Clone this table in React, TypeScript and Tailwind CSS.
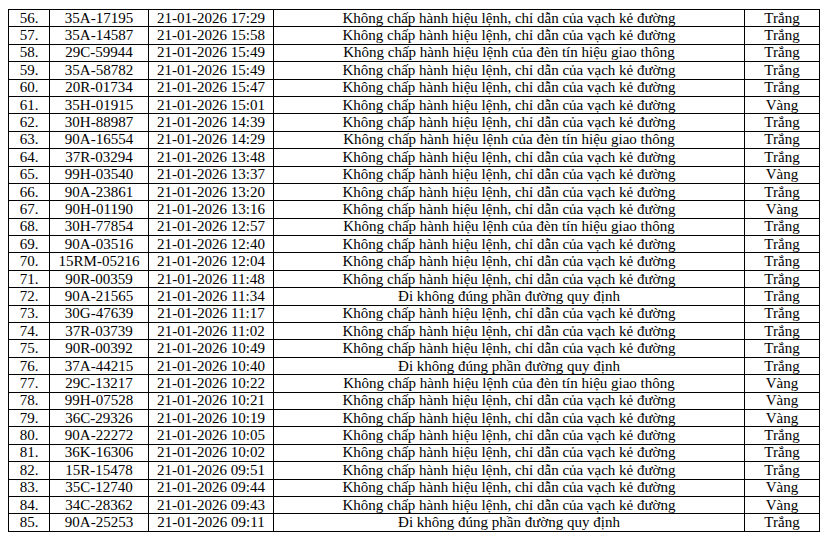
import React from 'react';

const VACH = 'Không chấp hành hiệu lệnh, chỉ dẫn của vạch kẻ đường';
const DEN = 'Không chấp hành hiệu lệnh của đèn tín hiệu giao thông';
const DI = 'Đi không đúng phần đường quy định';

const rows: [string, string, string, string][] = [
  ['35A-17195', '17:29', VACH, 'Trắng'],
  ['35A-14587', '15:58', VACH, 'Trắng'],
  ['29C-59944', '15:49', DEN, 'Trắng'],
  ['35A-58782', '15:49', VACH, 'Trắng'],
  ['20R-01734', '15:47', VACH, 'Trắng'],
  ['35H-01915', '15:01', VACH, 'Vàng'],
  ['30H-88987', '14:39', VACH, 'Trắng'],
  ['90A-16554', '14:29', DEN, 'Trắng'],
  ['37R-03294', '13:48', VACH, 'Trắng'],
  ['99H-03540', '13:37', VACH, 'Vàng'],
  ['90A-23861', '13:20', VACH, 'Trắng'],
  ['90H-01190', '13:16', VACH, 'Vàng'],
  ['30H-77854', '12:57', DEN, 'Trắng'],
  ['90A-03516', '12:40', VACH, 'Trắng'],
  ['15RM-05216', '12:04', VACH, 'Trắng'],
  ['90R-00359', '11:48', VACH, 'Trắng'],
  ['90A-21565', '11:34', DI, 'Trắng'],
  ['30G-47639', '11:17', VACH, 'Trắng'],
  ['37R-03739', '11:02', VACH, 'Trắng'],
  ['90R-00392', '10:49', VACH, 'Trắng'],
  ['37A-44215', '10:40', DI, 'Trắng'],
  ['29C-13217', '10:22', DEN, 'Vàng'],
  ['99H-07528', '10:21', VACH, 'Vàng'],
  ['36C-29326', '10:19', VACH, 'Vàng'],
  ['90A-22272', '10:05', VACH, 'Trắng'],
  ['36K-16306', '10:02', VACH, 'Trắng'],
  ['15R-15478', '09:51', VACH, 'Trắng'],
  ['35C-12740', '09:44', VACH, 'Vàng'],
  ['34C-28362', '09:43', VACH, 'Vàng'],
  ['90A-25253', '09:11', DI, 'Trắng'],
];

const cell = 'border border-black p-0 text-center align-middle leading-none';

export default function App() {
  return (
    <div className="w-[839px] h-[550px] bg-white pl-[8px] pt-[9px] text-black font-['Liberation_Serif','Times_New_Roman',serif] text-[15px]">
      <table className="border-collapse table-fixed w-[811px]">
        <colgroup>
          <col className="w-[41px]" />
          <col className="w-[99px]" />
          <col className="w-[125px]" />
          <col className="w-[471px]" />
          <col className="w-[75px]" />
        </colgroup>
        <tbody>
          {rows.map(([plate, time, desc, color], i) => (
            <tr key={plate} className="h-[17.4px]">
              <td className={cell}>{56 + i}.</td>
              <td className={cell}>{plate}</td>
              <td className={cell}>21-01-2026 {time}</td>
              <td className={cell}>{desc}</td>
              <td className={cell}>{color}</td>
            </tr>
          ))}
        </tbody>
      </table>
    </div>
  );
}
